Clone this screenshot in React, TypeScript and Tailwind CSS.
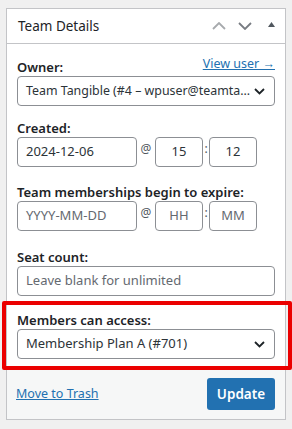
import React from "react";

const Chevron = ({ className = "" }: { className?: string }) => (
  <svg width="11" height="7" viewBox="0 0 11 7" className={className} fill="none">
    <path d="M1 1l4.5 4.5L10 1" stroke="#1d2327" strokeWidth="1.8" />
  </svg>
);

const Label = ({ children }: { children: React.ReactNode }) => (
  <div className="text-[13px] leading-[18px] font-semibold text-[#1d2327]">{children}</div>
);

const Sep = ({ ch, w }: { ch: string; w: string }) => (
  <span className={`${w} text-center text-[12px] leading-[16px] mt-[4px] text-[#50575e]`}>{ch}</span>
);

export default function App() {
  return (
    <div className="w-[292px] h-[429px] bg-[#f0f0f0] pt-2 px-[6px] font-['Noto_Sans',sans-serif] text-[#2c3338]">
      <div className="bg-white border border-[#c3c4c7]">
        <div className="h-[35px] flex items-center justify-between pl-[11px] pr-[9px] border-b border-[#c3c4c7]">
          <div className="text-[13.5px] text-[#1d2327]">Team Details</div>
          <div className="flex items-center">
            <svg width="14" height="8" viewBox="0 0 14 8" fill="none" className="mr-[12px]">
              <path d="M1 7l6-6 6 6" stroke="#a7aaad" strokeWidth="1.8" />
            </svg>
            <svg width="14" height="8" viewBox="0 0 14 8" fill="none" className="mr-[16px]">
              <path d="M1 1l6 6 6-6" stroke="#787c82" strokeWidth="1.8" />
            </svg>
            <svg width="7" height="5" viewBox="0 0 7 5" className="mr-[1px] mb-[3px]">
              <path d="M0 5L3.5 0 7 5z" fill="#50575e" />
            </svg>
          </div>
        </div>

        <div className="px-[10px] pt-[11px] pb-[9px]">
          <div className="flex items-end justify-between">
            <Label>Owner:</Label>
            <a className="text-[12.5px] leading-[18px] text-[#2271b1] underline mb-[3px]">View user →</a>
          </div>
          <div className="h-[30px] border border-[#8c8f94] rounded-[4px] flex items-center justify-between pl-[8px] pr-[9px]">
            <span className="text-[12.4px] whitespace-nowrap">Team Tangible (#4 – wpuser@teamta...</span>
            <Chevron />
          </div>

          <div className="mt-[13px]">
            <Label>Created:</Label>
            <div className="flex items-start">
              <div className="w-[120px] h-[30px] border border-[#8c8f94] rounded-[4px] flex items-center pl-[8px] text-[13px]">2024-12-06</div>
              <Sep ch="@" w="w-[18px]" />
              <div className="w-[48px] h-[30px] border border-[#8c8f94] rounded-[4px] flex items-center justify-center text-[13px]">15</div>
              <Sep ch=":" w="w-[6px]" />
              <div className="w-[48px] h-[30px] border border-[#8c8f94] rounded-[4px] flex items-center justify-center text-[13px]">12</div>
            </div>
          </div>

          <div className="mt-[16px]">
            <Label>Team memberships begin to expire:</Label>
            <div className="flex items-start">
              <div className="w-[120px] h-[30px] border border-[#8c8f94] rounded-[4px] flex items-center pl-[8px] text-[13px] text-[#646970]">YYYY-MM-DD</div>
              <Sep ch="@" w="w-[18px]" />
              <div className="w-[48px] h-[30px] border border-[#8c8f94] rounded-[4px] flex items-center justify-center text-[13px] text-[#646970]">HH</div>
              <Sep ch=":" w="w-[6px]" />
              <div className="w-[48px] h-[30px] border border-[#8c8f94] rounded-[4px] flex items-center justify-center text-[13px] text-[#646970]">MM</div>
            </div>
          </div>

          <div className="mt-[17px]">
            <Label>Seat count:</Label>
            <div className="h-[30px] border border-[#8c8f94] rounded-[4px] flex items-center pl-[8px] text-[13px] text-[#646970]">Leave blank for unlimited</div>
          </div>

          <div className="mt-[15px] relative">
            <div className="absolute -top-[10px] -bottom-[11px] -left-[15px] -right-[17px] border-[4px] border-[#eb0000] rounded-[2px] pointer-events-none" />
            <Label>Members can access:</Label>
            <div className="h-[30px] border border-[#8c8f94] rounded-[4px] flex items-center justify-between pl-[8px] pr-[9px]">
              <span className="text-[13px]">Membership Plan A (#701)</span>
              <Chevron />
            </div>
          </div>
        </div>

        <div className="bg-[#f6f7f7] border-t border-[#dcdcde] pl-[9px] pr-[10px] py-[9px] flex items-center justify-between">
          <a className="text-[12.5px] text-[#2271b1] underline">Move to Trash</a>
          <button className="h-[32px] w-[68px] rounded-[3px] bg-[#2271b1] text-white text-[13.5px] font-semibold">Update</button>
        </div>
      </div>
    </div>
  );
}
